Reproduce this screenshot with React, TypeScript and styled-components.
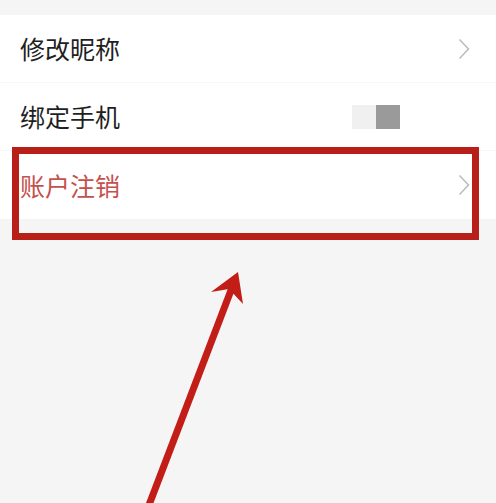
import styled, { createGlobalStyle } from "styled-components";

const GlobalStyle = createGlobalStyle`
  html, body {
    margin: 0;
    padding: 0;
    background: #f5f5f5;
  }
  body {
    font-family: "Noto Sans CJK SC", "Noto Sans", sans-serif;
  }
`;

function Chevron() {
  return (
    <svg width="12" height="22" viewBox="0 0 12 22" fill="none">
      <path d="M1.5 1.5 L10.5 11 L1.5 20.5" stroke="#bdbdbd" strokeWidth="1.6" />
    </svg>
  );
}

export default function App() {
  return (
    <>
      <GlobalStyle />
      <Page>
        <List>
          <Row>
            <Label>修改昵称</Label>
            <Chevron />
          </Row>
          <Row>
            <Label>绑定手机</Label>
            <Masked>
              <MaskBlock tone="#f0f0f0" />
              <MaskBlock tone="#9a9a9a" />
            </Masked>
          </Row>
          <Row last>
            <Label danger>账户注销</Label>
            <Chevron />
          </Row>
        </List>
        <Highlight />
        <Arrow width="496" height="503" viewBox="0 0 496 503">
          <line x1="149" y1="505" x2="233" y2="285" stroke="#c21d16" strokeWidth="7" />
          <path d="M238 272 L211 292 L229 289 L243 304 Z" fill="#c21d16" />
        </Arrow>
      </Page>
    </>
  );
}

const Page = styled.div`
  position: relative;
  width: 496px;
  height: 503px;
  padding-top: 15px;
  box-sizing: border-box;
  overflow: hidden;
  background: #f5f5f5;
`;

const List = styled.div`
  display: flex;
  flex-direction: column;
  background: #fff;
`;

const Row = styled.div<{ last?: boolean }>`
  display: flex;
  align-items: center;
  justify-content: space-between;
  height: 68px;
  padding: 0 26px 0 20px;
  box-sizing: border-box;
  border-bottom: ${(p) => (p.last ? "none" : "1px solid #f8f8f8")};
`;

const Label = styled.span<{ danger?: boolean }>`
  font-size: 25px;
  line-height: 1;
  color: ${(p) => (p.danger ? "#c5514d" : "#1f1f1f")};
`;

const Masked = styled.div`
  display: flex;
  margin-right: 70px;
`;

const MaskBlock = styled.div<{ tone: string }>`
  width: 24px;
  height: 24px;
  background: ${(p) => p.tone};
`;

const Highlight = styled.div`
  position: absolute;
  left: 12px;
  top: 147px;
  width: 467px;
  height: 93px;
  box-sizing: border-box;
  border: 7px solid #b71f18;
  pointer-events: none;
`;

const Arrow = styled.svg`
  position: absolute;
  left: 0;
  top: 0;
  pointer-events: none;
`;
